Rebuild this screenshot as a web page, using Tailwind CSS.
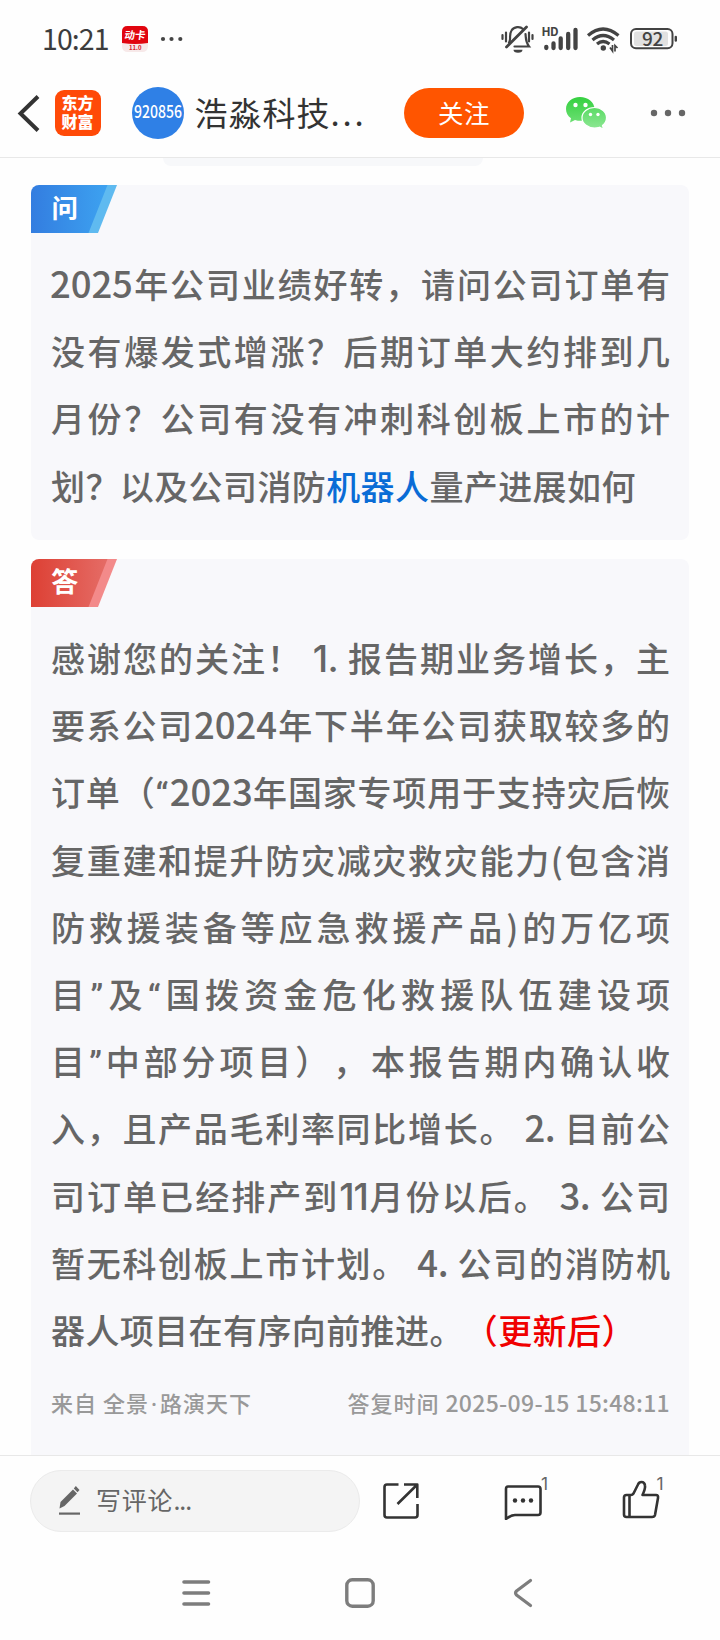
<!DOCTYPE html>
<html lang="zh-CN">
<head>
<meta charset="utf-8">
<meta name="viewport" content="width=720">
<title>浩淼科技</title>
<script src="https://cdn.jsdelivr.net/npm/@tailwindcss/browser@4"></script>
</head>
<body class="w-[720px] h-[1640px] overflow-hidden bg-[#fefefe] flex flex-col font-['Noto_Sans_CJK_SC',sans-serif] text-[#333] [text-spacing-trim:space-all]">

  <!-- status bar -->
  <div class="h-[78px] shrink-0 flex items-center pl-[42px] pr-[40px]">
    <span class="w-[80px] text-[28.500px] leading-[36px] tracking-[-0.900px] text-[#3c3c3c] whitespace-nowrap -mt-[2px]">10:21</span>
    <svg class="w-[26px] h-[26px]" viewBox="0 0 26 26">
      <rect width="26" height="26" rx="5.5" fill="#f7e9e9"/>
      <path d="M0 17V5.500Q0 0 5.500 0H20.500Q26 0 26 5.500V17Q13 19 0 17Z" fill="#e1050f"/>
      <text x="13" y="13.500" text-anchor="middle" font-size="10.500" font-weight="700" fill="#fff" transform="skewX(-8) translate(1.500 0)">动卡</text>
      <text x="13.300" y="24" text-anchor="middle" font-size="6" font-weight="700" fill="#d8202a">11.0</text>
    </svg>
    <svg class="ml-[12px] w-[24px] h-[6px]" viewBox="0 0 24 6" fill="#444"><circle cx="3" cy="3" r="2.100"/><circle cx="11.500" cy="3" r="2.100"/><circle cx="20.300" cy="3" r="2.100"/></svg>
    <svg class="ml-auto w-[180px] h-[36px]" viewBox="500 21 180 36" fill="none" stroke="#434343" stroke-linecap="round">
      <!-- muted bell -->
      <g stroke-width="2.200">
        <path d="M502.500 35v4M506 32.500v9M529 32.500v9M532.500 35v4"/>
        <path d="M509 42.500C511.500 40 508.500 35 511.500 30.500C514 26.500 520 26 523 29"/>
        <path d="M525.500 34C526 39 525.500 42 529 46.500H514.500"/>
        <path d="M506.500 47L526.500 27" stroke-width="2.800"/>
        <path d="M513.500 49.800h9a4.500 3 0 0 1-9 0Z" fill="#434343" stroke="none"/>
      </g>
      <text x="541.500" y="36" font-size="12" font-weight="700" fill="#434343" stroke="none" textLength="17">HD</text>
      <path d="M546.300 48v-1.200M553.500 48v-4.500M560.700 48v-9.500M568.200 48v-14M575.500 48V30" stroke-width="4.300"/>
      <!-- wifi -->
      <g stroke-width="3.200" stroke-linecap="butt">
        <path d="M588 35.500Q603 22.500 618.500 35.500"/>
        <path d="M592.500 40Q603 31 614 40"/>
        <path d="M597 44Q603 39 609.500 44"/>
        <circle cx="603.300" cy="48" r="2.700" fill="#434343" stroke="none"/>
        <path d="M610 47.500l2.500 3.500v-6M617.500 48l-2.500-2.500v6" stroke-width="1.700"/>
      </g>
      <!-- battery -->
      <rect x="631" y="29" width="41.500" height="19.300" rx="5" stroke-width="2"/>
      <rect x="634" y="31.500" width="34" height="14.500" rx="2.500" fill="#e1e1e1" stroke="none"/>
      <path d="M675.800 37v3.500" stroke-width="2.400"/>
      <text x="652.500" y="45.500" text-anchor="middle" font-size="19" font-weight="500" letter-spacing="-.3" fill="#434343" stroke="none">92</text>
    </svg>
  </div>

  <!-- title bar -->
  <header class="h-[80px] shrink-0 flex items-center border-b border-[#e8e8e8] pb-[9px]">
    <svg class="ml-[17px] w-[24px] h-[40px]" viewBox="0 0 24 40" fill="none" stroke="#333" stroke-width="4"><path d="M21 3.500L3.500 20.500L21 37.500"/></svg>
    <svg class="ml-[14px] size-[46px] rounded-[9px] bg-[#ff4a08]" viewBox="0 0 46 46" fill="#fff" font-weight="900" font-size="16" text-anchor="middle">
      <text x="22.500" y="19">东方</text>
      <text x="22.500" y="38">财富</text>
    </svg>
    <div class="ml-[31px] size-[52px] rounded-full bg-[#2f80e6] flex items-center justify-center">
      <svg class="w-[50px] h-[26px]" viewBox="0 0 50 26"><text x="1" y="18" font-size="17.500" font-weight="500" fill="#fff" textLength="48" lengthAdjust="spacingAndGlyphs">920856</text></svg>
    </div>
    <h1 class="ml-[10.500px] -mt-[2px] w-[209.500px] text-[33px] tracking-[1px] leading-[48px] whitespace-nowrap">浩淼科技<span class="tracking-[2.800px]">...</span></h1>
    <button class="w-[120px] h-[50px] rounded-full bg-[#ff5500] text-white text-[25.500px] tracking-[0.600px] leading-[48px] pb-[2px]">关注</button>
    <svg class="ml-[41px] w-[42px] h-[34px]" viewBox="0 0 42 34">
      <defs>
        <linearGradient id="wa" x1="0" y1="0" x2="0" y2="1"><stop offset="0" stop-color="#35d040"/><stop offset="1" stop-color="#6bdf72"/></linearGradient>
        <linearGradient id="wb" x1="0" y1="0" x2="0" y2="1"><stop offset="0" stop-color="#5bdb65"/><stop offset="1" stop-color="#8ee794"/></linearGradient>
      </defs>
      <path d="M15 1C7 1 1 6.200 1 13C1 16.800 2.800 20 6 22.300L5 26.500L10 24C19 27 29.500 22 29.500 13C29.500 6.200 23 1 15 1Z" fill="url(#wa)"/>
      <path d="M29.500 11.500C22.500 11.500 17 16 17 21.800C17 27.500 22.500 32 29.500 32C31.300 32 33 31.700 34.500 31.200L38.500 33.200L37.500 29.500C40 27.600 41.500 25 41.500 21.800C41.500 16 36.500 11.500 29.500 11.500Z" fill="url(#wb)" stroke="#fff" stroke-width="1.200"/>
      <g fill="#fff"><circle cx="10.500" cy="9" r="2.200"/><circle cx="20.500" cy="9" r="2.200"/><circle cx="25.500" cy="18.500" r="1.700"/><circle cx="33" cy="18.500" r="1.700"/></g>
    </svg>
    <svg class="ml-[43px] w-[38px] h-[8px]" viewBox="0 0 38 8" fill="#666"><circle cx="4" cy="4" r="3.200"/><circle cx="18" cy="4" r="3.200"/><circle cx="32" cy="4" r="3.200"/></svg>
  </header>

  <!-- scrolled content -->
  <main class="h-[1297px] shrink-0 overflow-hidden px-[31px]">
    <div class="ml-[132px] w-[320px] h-[8px] rounded-b-[8px] bg-[#f7f8fa]"></div>

    <section class="mt-[19px] h-[355px] rounded-[8px] bg-[#f8f8fb] overflow-hidden">
      <svg class="w-[86px] h-[48px]" viewBox="0 0 86 48">
        <defs><linearGradient id="qa"><stop offset="0" stop-color="#337de0"/><stop offset="1" stop-color="#3da2f0"/></linearGradient></defs>
        <path d="M70 0H86L67 48H50Z" fill="#5fbaf0"/><path d="M0 0H76.500L57.500 48H0Z" fill="url(#qa)"/>
        <text x="33.700" y="33" text-anchor="middle" font-size="26.500" font-weight="700" fill="#fff">问</text>
      </svg>
      <div class="mt-[17px] pl-[20px] w-[639.500px] text-[34px] leading-[67.200px] tracking-[0.400px] font-medium text-[#666] whitespace-nowrap [text-align-last:justify]">
        <div class="h-[67.200px]"><span class="text-[36.500px] leading-[1px] tracking-[-0.100px] -ml-[1px]">2025</span>年公司业绩好转，请问公司订单有</div>
        <div class="h-[67.200px]">没有爆发式增涨？后期订单大约排到几</div>
        <div class="h-[67.200px]">月份？公司有没有冲刺科创板上市的计</div>
        <div class="h-[67.200px] [text-align-last:left]">划？以及公司消防<a class="text-[#0a6cd6]">机器人</a>量产进展如何</div>
      </div>
    </section>

    <section class="mt-[19px] h-[920px] rounded-[8px] bg-[#f8f8fb] overflow-hidden">
      <svg class="w-[86px] h-[48px]" viewBox="0 0 86 48">
        <defs><linearGradient id="aa"><stop offset="0" stop-color="#dd4034"/><stop offset="1" stop-color="#e56c66"/></linearGradient></defs>
        <path d="M70 0H86L67 48H50Z" fill="#f38a8a"/><path d="M0 0H76.500L57.500 48H0Z" fill="url(#aa)"/>
        <text x="33.700" y="33" text-anchor="middle" font-size="27" font-weight="700" fill="#fff">答</text>
      </svg>
      <div class="mt-[17px] pl-[20px] w-[639.500px] text-[34px] leading-[67.200px] tracking-[0.400px] font-medium text-[#666] whitespace-nowrap [text-align-last:justify]">
        <div class="h-[67.200px]">感谢您的关注！ <span class="font-[Inter] text-[37px] leading-[1px] tracking-[-0.500px]">1.</span> 报告期业务增长，主</div>
        <div class="h-[67.200px]">要系公司<span class="text-[36.500px] leading-[1px] tracking-[-0.100px]">2024</span>年下半年公司获取较多的</div>
        <div class="h-[67.200px]">订单（<span class="font-[Roboto] leading-[1px] mr-[1px]">“</span><span class="text-[36.500px] leading-[1px] tracking-[-0.100px]">2023</span>年国家专项用于支持灾后恢</div>
        <div class="h-[67.200px]">复重建和提升防灾减灾救灾能力(包含消</div>
        <div class="h-[67.200px]">防救援装备等应急救援产品)的万亿项</div>
        <div class="h-[67.200px]">目<span class="font-[Roboto] leading-[1px]">”</span>及<span class="font-[Roboto] leading-[1px]">“</span>国拨资金危化救援队伍建设项</div>
        <div class="h-[67.200px]">目<span class="font-[Roboto] leading-[1px]">”</span>中部分项目），本报告期内确认收</div>
        <div class="h-[67.200px]">入，且产品毛利率同比增长。 <span class="text-[36.500px] leading-[1px] tracking-[-0.400px]">2.</span> 目前公</div>
        <div class="h-[67.200px]">司订单已经排产到<span class="font-[Inter] text-[37px] leading-[1px] tracking-[-1px]">11</span>月份以后。 <span class="text-[36.500px] leading-[1px] tracking-[-0.400px]">3.</span> 公司</div>
        <div class="h-[67.200px]">暂无科创板上市计划。 <span class="text-[36.500px] leading-[1px] tracking-[-0.400px]">4.</span> 公司的消防机</div>
        <div class="h-[67.200px] [text-align-last:left]">器人项目在有序向前推进。<span class="text-[#f00000]">（更新后）</span></div>
      </div>
      <div class="mt-[21px] pl-[20px] pr-[19px] flex justify-between text-[22px] leading-[36px] tracking-[1px] font-medium text-[#999] whitespace-nowrap">
        <span>来自 全景<span class="font-['Noto_Sans'] leading-[1px] mx-[2px]">·</span>路演天下</span>
        <span>答复时间 <span class="text-[23px] leading-[1px] tracking-[0.300px]">2025-09-15 15:48:11</span></span>
      </div>
    </section>
  </main>

  <!-- comment bar -->
  <div class="h-[92px] shrink-0 border-t border-[#e8e8e8] pt-[14px] flex items-start">
    <div class="ml-[30px] w-[330px] h-[62px] rounded-full border border-[#ebebeb] bg-[#f4f4f4] flex items-center text-[#666]">
      <svg class="ml-[27px] -mt-[2px] w-[24px] h-[32px]" viewBox="0 0 24 32" fill="#666"><path d="M1.500 24.500L2.500 18L15 5.500L19 9.500L6.500 22Z"/><path d="M15.800 4.500L17.800 2L21.500 6L19.500 8.300Z"/><path d="M1 28.500H22V30.700H1Z"/></svg>
      <span class="ml-[14px] text-[25px] tracking-[0.800px] leading-[40px] -mt-[4px]">写评论<span class="tracking-[-1px]">...</span></span>
    </div>
    <svg class="ml-[22px] w-[300px] h-[50px]" viewBox="382 1470.500 300 50" fill="none" stroke="#333" stroke-width="2.600" stroke-linejoin="round">
      <path d="M398.500 1485H387Q384.500 1485 384.500 1487.500V1515.500Q384.500 1518 387 1518H415Q417.500 1518 417.500 1515.500V1504.500"/>
      <path d="M404 1485H417.300V1498.500M417.300 1485L397.500 1504.500"/>
      <path d="M508 1487H538Q540.500 1487 540.500 1489.500V1513Q540.500 1515.500 538 1515.500H515C511 1515.500 509 1517.500 506 1519.500V1489.500Q506 1487 508 1487Z"/>
      <g fill="#333" stroke="none"><circle cx="515" cy="1501" r="2.200"/><circle cx="523" cy="1501" r="2.200"/><circle cx="531" cy="1501" r="2.200"/></g>
      <path d="M629.500 1495.500H626.500Q624 1495.500 624 1498V1515Q624 1517.500 626.500 1517.500H652Q654.500 1517.500 655 1515.500L658 1498.500Q658.500 1495.500 656 1495.500H642.500Q645.500 1489 645 1486Q644.500 1482.500 641.500 1482.500Q639 1482.500 638 1485L633.500 1494Q632.500 1495.500 631 1495.500H629.500V1517.500"/>
      <g fill="#666" stroke="none" font-size="17.500" font-family="Inter"><text x="541" y="1490.500">1</text><text x="656.500" y="1490.500">1</text></g>
    </svg>
  </div>

  <!-- system navigation -->
  <nav class="h-[93px] shrink-0 flex items-center pl-[181px] pb-[1px]">
    <svg class="w-[30px] h-[30px]" viewBox="0 0 30 30" stroke="#7d7d7d" stroke-width="3.600" stroke-linecap="round"><path d="M3 4H27.500M3 15H27.500M3 26H27.500"/></svg>
    <svg class="ml-[134px] w-[30px] h-[30px]" viewBox="0 0 30 30" fill="none" stroke="#7d7d7d" stroke-width="3.400"><rect x="1.800" y="1.800" width="26.400" height="26.400" rx="5.500"/></svg>
    <svg class="ml-[137.500px] w-[20px] h-[30px]" viewBox="0 0 20 30" fill="none" stroke="#7d7d7d" stroke-width="3.200" stroke-linecap="round" stroke-linejoin="round"><path d="M17.500 2.500L3.500 13Q1.500 15 3.500 17L17.500 27.500"/></svg>
  </nav>
</body>
</html>
